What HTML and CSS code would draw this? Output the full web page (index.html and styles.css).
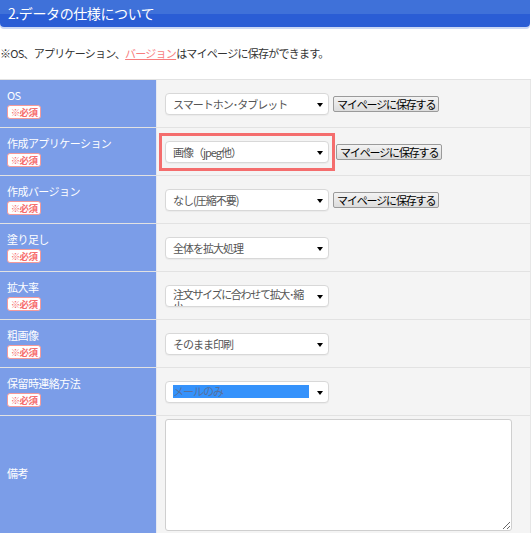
FILE: index.html
```html
<!DOCTYPE html>
<html lang="ja">
<head>
<meta charset="utf-8">
<link rel="stylesheet" href="styles.css">
</head>
<body>
<div class="page">
  <h2 class="head">2.データの仕様について</h2>
  <p class="note">※OS、アプリケーション、<span class="link">バージョン</span>はマイページに保存ができます。</p>
  <div class="table">
    <div class="row">
      <div class="label"><span class="lt">OS</span><span class="badge">※必須</span></div>
      <div class="cell">
        <div class="sel"><span class="st">スマートホン･タブレット</span></div>
        <button class="btn">マイページに保存する</button>
      </div>
    </div>
    <div class="row">
      <div class="label"><span class="lt">作成アプリケーション</span><span class="badge">※必須</span></div>
      <div class="cell">
        <div class="hl"><div class="sel"><span class="st">画像（jpeg他）</span></div></div>
        <button class="btn btn-hl">マイページに保存する</button>
      </div>
    </div>
    <div class="row">
      <div class="label"><span class="lt">作成バージョン</span><span class="badge">※必須</span></div>
      <div class="cell">
        <div class="sel"><span class="st">なし(圧縮不要)</span></div>
        <button class="btn">マイページに保存する</button>
      </div>
    </div>
    <div class="row">
      <div class="label"><span class="lt">塗り足し</span><span class="badge">※必須</span></div>
      <div class="cell">
        <div class="sel"><span class="st">全体を拡大処理</span></div>
      </div>
    </div>
    <div class="row">
      <div class="label"><span class="lt">拡大率</span><span class="badge">※必須</span></div>
      <div class="cell">
        <div class="sel sel-wrap"><span class="st st-wrap">注文サイズに合わせて拡大･縮小</span></div>
      </div>
    </div>
    <div class="row">
      <div class="label"><span class="lt">粗画像</span><span class="badge">※必須</span></div>
      <div class="cell">
        <div class="sel"><span class="st">そのまま印刷</span></div>
      </div>
    </div>
    <div class="row">
      <div class="label"><span class="lt">保留時連絡方法</span><span class="badge">※必須</span></div>
      <div class="cell">
        <div class="sel"><span class="st st-sel">メールのみ</span></div>
      </div>
    </div>
    <div class="row row-tall">
      <div class="label"><span class="lt">備考</span></div>
      <div class="cell cell-top">
        <textarea class="ta"></textarea>
      </div>
    </div>
  </div>
</div>
</body>
</html>
```
FILE: styles.css
```css
html, body {
  margin: 0;
  padding: 0;
  background: #fff;
  font-family: "Noto Sans CJK JP", "Noto Sans", sans-serif;
  overflow: hidden;
}
.page {
  width: 531px;
}
.head {
  margin: 0;
  width: 530px;
  height: 27px;
  box-sizing: border-box;
  padding-left: 8px;
  font-size: 14px;
  font-weight: normal;
  letter-spacing: -0.4px;
  line-height: 27px;
  color: #fff;
  background: linear-gradient(to bottom, #3f71d9 0%, #3f71d9 50%, #2a5dd5 52%, #2a5dd5 100%);
  border-radius: 0 0 4px 4px;
  box-shadow: 0 2px 0 #cbd8f4;
}
.note {
  margin: 19px 0 0 0;
  height: 14px;
  line-height: 14px;
  font-size: 11px;
  letter-spacing: -0.75px;
  color: #333;
}
.link {
  color: #f77d7d;
  text-decoration: underline;
}
.table {
  margin-top: 19px;
  width: 530px;
  border-top: 1px solid #e2e2e2;
  border-right: 1px solid #e6e6e6;
}
.row {
  display: flex;
  height: 47px;
  border-bottom: 1px solid #e2e2e2;
}
.row-tall {
  height: 120px;
}
.label {
  width: 157px;
  flex: none;
  box-sizing: border-box;
  padding-left: 7px;
  background: #7b9de8;
  border-right: 1px solid #e4e8f2;
  display: flex;
  flex-direction: column;
  justify-content: center;
  align-items: flex-start;
  gap: 3px;
}
.row-tall .label {
  padding-bottom: 6px;
}
.lt {
  color: #fff;
  font-size: 11px;
  letter-spacing: -0.55px;
  line-height: 13px;
}
.badge {
  display: block;
  box-sizing: border-box;
  height: 14px;
  width: 34px;
  line-height: 12px;
  text-align: center;
  font-size: 9.5px;
  font-weight: bold;
  letter-spacing: -0.6px;
  color: #f66d6d;
  background: #fff;
  border: 1px solid #f59a9a;
  border-radius: 3px;
}
.cell {
  flex: 1;
  background: #f4f4f4;
  display: flex;
  align-items: center;
  padding-left: 8px;
  gap: 4px;
}
.cell-top {
  align-items: flex-start;
  padding-top: 3px;
}
.sel {
  position: relative;
  width: 164px;
  height: 22px;
  box-sizing: border-box;
  background: #fff;
  border: 1px solid #d8d8d8;
  border-radius: 4px;
  box-shadow: 0 1px 1px rgba(0,0,0,0.04);
  padding-left: 7px;
  display: flex;
  align-items: center;
  overflow: hidden;
}
.sel::after {
  content: "";
  position: absolute;
  right: 5px;
  top: 9px;
  border-left: 3px solid transparent;
  border-right: 3px solid transparent;
  border-top: 4px solid #000;
}
.st {
  font-size: 11px;
  letter-spacing: -1px;
  color: #555;
  white-space: nowrap;
  line-height: 14px;
}
.sel-wrap {
  align-items: flex-start;
  padding-top: 2px;
}
.st-wrap {
  white-space: normal;
  width: 132px;
  line-height: 12px;
  letter-spacing: -1.3px;
}
.st-sel {
  background: #3592fb;
  color: #56719f;
  width: 136px;
  line-height: 13px;
}
.hl {
  margin-left: -6px;
  margin-right: -3px;
  border: 3px solid #f46d6d;
  padding: 5px 3px;
  background: #f4f4f4;
}
.btn {
  height: 16px;
  padding: 0 3px;
  margin: 0;
  box-sizing: border-box;
  font-family: "Noto Sans CJK JP", "Noto Sans", sans-serif;
  font-size: 11px;
  letter-spacing: -1.15px;
  line-height: 14px;
  color: #000;
  background: linear-gradient(to bottom, #f3f3f3, #dcdcdc);
  border: 1px solid #9a9a9a;
  border-radius: 2px;
  white-space: nowrap;
}
.ta {
  display: block;
  width: 347px;
  height: 112px;
  box-sizing: border-box;
  margin: 0;
  background: #fff;
  border: 1px solid #cfcfcf;
  border-radius: 3px;
  resize: both;
  outline: none;
}
```
